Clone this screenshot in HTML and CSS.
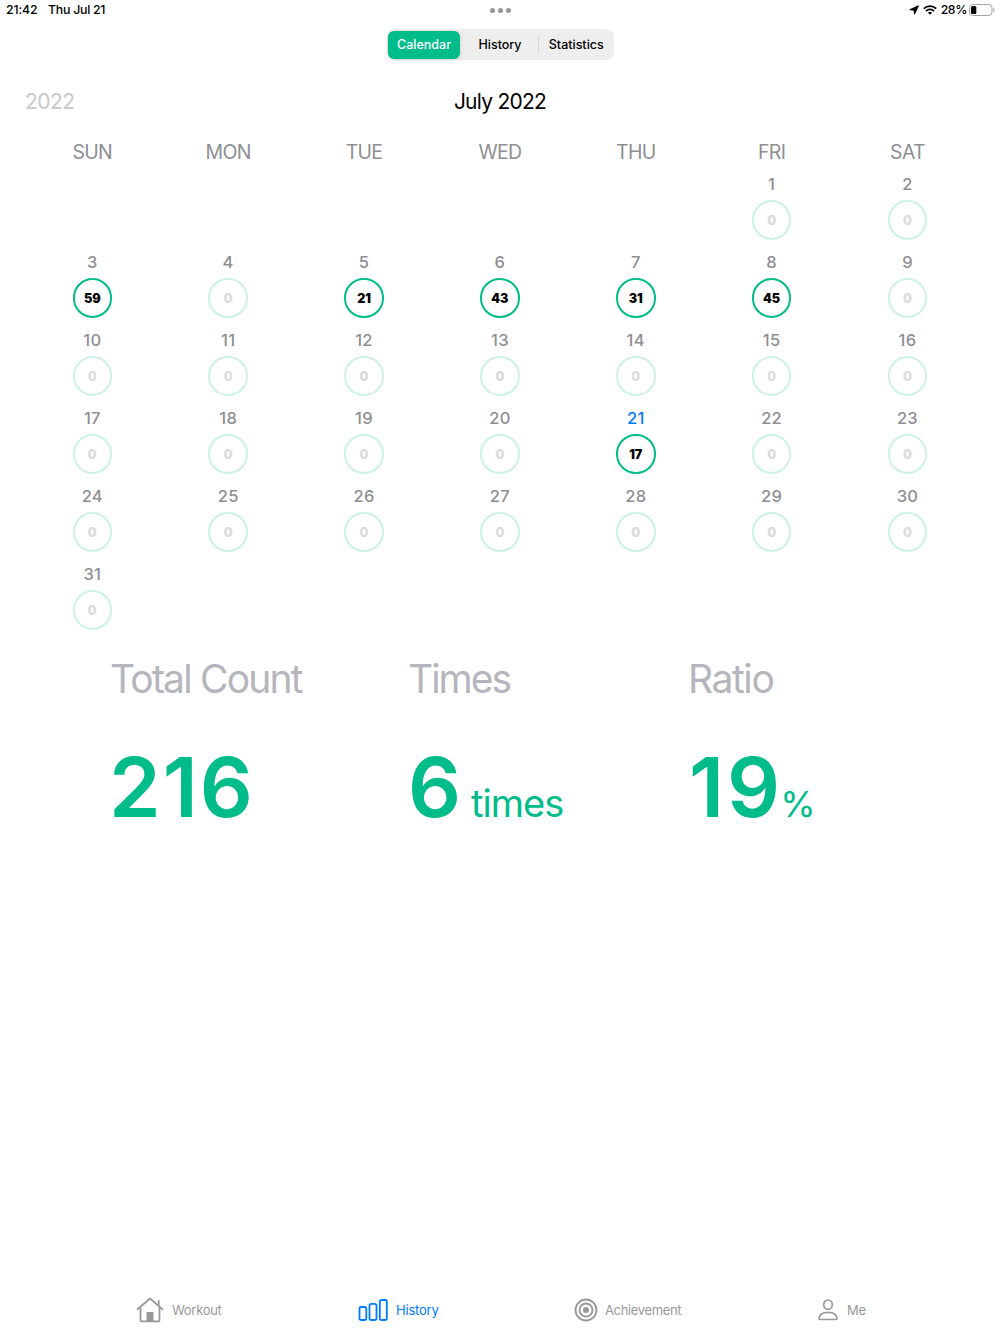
FILE: index.html
```
<!DOCTYPE html>
<html lang="en">
<head>
  <meta charset="UTF-8" />
  <meta name="viewport" content="width=device-width, initial-scale=1" />
  <title>History - Calendar</title>
  <link rel="stylesheet" href="styles.css">
</head>
<body>
  <div class="status-bar">
    <div class="status-left"><span class="clock">21:42</span><span class="today-label">Thu Jul 21</span></div>
    <div class="dots"><i></i><i></i><i></i></div>
    <div class="status-right">
      <svg class="location" width="10" height="10" viewBox="0 0 10 10"><path d="M9.4 .8 5.600 9.200 5 5.200 .8 4.700Z" fill="#000" stroke="#000" stroke-width=".9" stroke-linejoin="round"/></svg>
      <svg class="wifi" width="14" height="10" viewBox="0 0 14 10" fill="none" stroke="#000" stroke-width="1.8"><path d="M.8 3.7a8.9 8.9 0 0 1 12.4 0"/><path d="M3 6.1a5.7 5.7 0 0 1 8 0"/><path d="M7 9.8 4.9 7.7a3 3 0 0 1 4.2 0Z" fill="#000" stroke="none"/></svg>
      <span class="percent">28%</span>
      <svg class="battery" width="26" height="12" viewBox="0 0 26 12"><rect x=".5" y=".5" width="22.5" height="11" rx="3.2" fill="none" stroke="#a3a3a3"/><rect x="2" y="2" width="5.3" height="8" rx="1.5"/><path d="M24.3 4v4q1.4-.6 1.4-2t-1.4-2Z" fill="#a3a3a3"/></svg>
    </div>
  </div>

  <div class="segmented">
    <button class="segment selected">Calendar</button>
    <button class="segment">History</button>
    <button class="segment last">Statistics</button>
  </div>

  <header class="month-header">
    <span class="year">2022</span>
    <h1>July 2022</h1>
    <span></span>
  </header>

  <div class="weekdays">
    <span>SUN</span><span>MON</span><span>TUE</span><span>WED</span><span>THU</span><span>FRI</span><span>SAT</span>
  </div>
  <div class="calendar" id="calendar">
    <!-- days -->
  </div>

  <section class="stats">
    <div class="stat total">
      <h2>Total Count</h2>
      <p><b>216</b></p>
    </div>
    <div class="stat times">
      <h2>Times</h2>
      <p><b>6</b><span class="unit">times</span></p>
    </div>
    <div class="stat ratio">
      <h2>Ratio</h2>
      <p><b>19</b><span class="unit">%</span></p>
    </div>
  </section>

  <nav class="tab-bar">
    <a class="tab workout">
      <svg width="28" height="26" viewBox="0 0 28 26" fill="none" stroke="currentColor" stroke-width="1.8" stroke-linecap="round" stroke-linejoin="round"><path d="M1.5 12.2 14 1.5l12.5 10.7M4.5 10v13.3q0 1 1 1h17q1 0 1-1V10M22.8 8.500V3.800"/><path d="M11 24v-8.500h6V24Z" fill="currentColor" stroke-width="1"/></svg>
      <span>Workout</span>
    </a>
    <a class="tab history active">
      <svg width="30" height="22" viewBox="0 0 30 22" fill="none" stroke="currentColor" stroke-width="1.8"><rect x="1.500" y="8" width="6.800" height="13" rx="1.800"/><rect x="11.500" y="4.800" width="7" height="16.200" rx="1.800"/><rect x="21.800" y="1" width="7" height="20" rx="1.800"/></svg>
      <span>History</span>
    </a>
    <a class="tab achievement">
      <svg width="24" height="24" viewBox="0 0 24 24" fill="none" stroke="currentColor" stroke-width="1.9"><circle cx="12" cy="12" r="10.500"/><circle cx="12" cy="12" r="6.500"/><circle cx="12" cy="12" r="3" fill="currentColor" stroke="none"/></svg>
      <span>Achievement</span>
    </a>
    <a class="tab me">
      <svg width="20" height="22" viewBox="0 0 20 22" fill="none" stroke="currentColor" stroke-width="1.7"><ellipse cx="10" cy="5.700" rx="4.300" ry="4.700"/><path d="M2.200 20.500Q1 20.500 1 19.200C1.400 15.500 5 13.300 10 13.300s8.600 2.200 9 5.900q0 1.300-1.200 1.300Z"/></svg>
      <span>Me</span>
    </a>
  </nav>

  <script>
    const calendar = document.getElementById("calendar");
    const counts = { 3: 59, 5: 21, 6: 43, 7: 31, 8: 45, 21: 17 };
    const today = 21;

    for (let day = 1; day <= 31; day++) {
      const count = counts[day] || 0;
      const cell = document.createElement("div");
      cell.className = "day" + (count ? " done" : "") + (day === today ? " today" : "");
      cell.innerHTML = `
        <span class="date">${day}</span>
        <span class="ring">${count}</span>
      `;
      calendar.appendChild(cell);
    }
  </script>
</body>
</html>
```
FILE: styles.css
```
* {
  box-sizing: border-box;
}
body {
  margin: 0;
  height: 1334px;
  display: flex;
  flex-direction: column;
  font-family: Inter, "Liberation Sans", sans-serif;
  background: #fff;
  color: #000;
}
h1, h2, p {
  margin: 0;
  font-weight: 400;
}
svg {
  display: block;
}

/* status bar */
.status-bar {
  height: 20px;
  display: grid;
  grid-template-columns: 1fr auto 1fr;
  align-items: center;
  padding: 0 5px 0 6px;
  font-size: 12.3px;
  font-weight: 500;
  line-height: 20px;
}
.clock {
  letter-spacing: -0.1px;
}
.today-label {
  margin-left: 10.5px;
  letter-spacing: -0.25px;
}
.dots {
  display: flex;
  gap: 3px;
}
.dots i {
  width: 5px;
  height: 5px;
  border-radius: 50%;
  background: #949494;
}
.status-right {
  display: flex;
  justify-content: flex-end;
  align-items: center;
}
.percent {
  letter-spacing: -0.4px;
}
.wifi {
  margin: 0 4px 0 4px;
}
.battery {
  margin-left: 2px;
}

/* segmented control */
.segmented {
  align-self: center;
  width: 227px;
  height: 31px;
  margin-top: 9px;
  padding: 1.5px 1px 1.5px 1.5px;
  display: grid;
  grid-template-columns: 72px 78px 1fr;
  border-radius: 8px;
  background: #eee;
}
.segment {
  border: none;
  padding: 0 0 0 2px;
  margin: 0;
  background: none;
  color: #000;
  font: 500 12.5px/28px Inter, sans-serif;
}
.segment.selected {
  padding: 0;
  border-radius: 6px;
  background: #00bb8a;
  color: #fff;
  box-shadow: 0 1px 4px rgba(0, 0, 0, 0.15);
}
.segment.last {
  background: linear-gradient(#d8d8d8, #d8d8d8) 0 center / 1px 17px no-repeat;
}

/* month */
.month-header {
  height: 30px;
  margin-top: 27px;
  padding: 0 25px;
  display: grid;
  grid-template-columns: 1fr auto 1fr;
  font-size: 21px;
  line-height: 30px;
  letter-spacing: -0.5px;
}
.month-header h1 {
  font-size: 21px;
  letter-spacing: -0.75px;
}
.year {
  color: #c8c8c8;
}
.weekdays, .calendar {
  display: grid;
  grid-template-columns: repeat(7, 1fr);
  padding: 0 24.6px 0 24.4px;
  text-align: center;
}
.weekdays {
  height: 30px;
  margin-top: 20px;
  font-size: 19.5px;
  line-height: 30px;
  letter-spacing: -0.7px;
  color: #8e8e93;
}
.calendar {
  margin-top: 5px;
  grid-auto-rows: 78px;
}
.day {
  display: flex;
  flex-direction: column;
  align-items: center;
}
.day:first-child {
  grid-column-start: 6;
}
.date {
  height: 24px;
  line-height: 24px;
  font-size: 16.5px;
  font-weight: 500;
  letter-spacing: 0.3px;
  color: #8e8e93;
}
.today .date {
  color: #007aff;
}
.ring {
  width: 39.5px;
  height: 39.5px;
  margin-top: 4px;
  border: 2px solid #ccf1e8;
  border-radius: 50%;
  font-size: 12.5px;
  font-weight: 900;
  line-height: 37px;
  color: #dcdcdc;
}
.done .ring {
  border-color: #00bb8a;
  color: #000;
}

/* stats */
.stats {
  display: grid;
  grid-template-columns: 299px 279px 1fr;
  margin-top: 14px;
  padding-left: 110px;
}
.stat h2 {
  height: 50px;
  font-size: 39px;
  line-height: 50px;
  letter-spacing: -1.8px;
  color: #b4b5bd;
}
.times h2 {
  margin-left: -1px;
  letter-spacing: -2px;
}
.ratio h2 {
  letter-spacing: -1.4px;
}
.stat p {
  height: 100px;
  margin-top: 33px;
  line-height: 100px;
  color: #00bb8a;
  white-space: nowrap;
}
.stat b {
  font-size: 83px;
  font-weight: 600;
}
.total b {
  margin-left: -1px;
  letter-spacing: 2px;
}
.times b {
  margin-left: -1px;
}
.ratio b {
  margin-left: 1px;
  letter-spacing: 3px;
}
.unit {
  font-size: 38px;
}
.times .unit {
  margin-left: 10px;
  letter-spacing: -1px;
}
.ratio .unit {
  margin-left: -3px;
  font-size: 36px;
}

/* tab bar */
.tab-bar {
  height: 48px;
  margin-top: auto;
  display: grid;
  grid-template-columns: 222px 216px 244px 1fr;
  padding-left: 136px;
  color: #999;
  font-size: 13px;
  letter-spacing: -0.3px;
}
.tab {
  display: flex;
  align-items: center;
  gap: 8px;
}
.tab.achievement {
  gap: 7px;
  letter-spacing: -0.35px;
}
.tab.me {
  gap: 9px;
}
.tab.active {
  color: #007aff;
  letter-spacing: -0.2px;
}
```
